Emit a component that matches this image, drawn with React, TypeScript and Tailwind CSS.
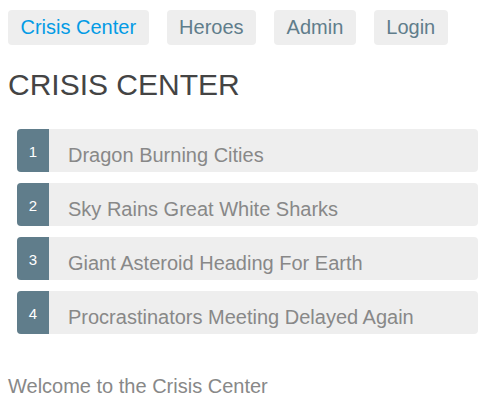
const links = ["Crisis Center", "Heroes", "Admin", "Login"];

const crises = [
  { id: 1, name: "Dragon Burning Cities" },
  { id: 2, name: "Sky Rains Great White Sharks" },
  { id: 3, name: "Giant Asteroid Heading For Earth" },
  { id: 4, name: "Procrastinators Meeting Delayed Again" },
];

export default function App() {
  return (
    <div
      className="min-h-[403px] bg-white pl-2 pr-[5px] pt-[10px]"
      style={{ fontFamily: '"Liberation Sans", Arial, sans-serif' }}
    >
      <nav className="flex gap-[18px]">
        {links.map((label, i) => (
          <a
            key={label}
            className={
              "flex h-[35px] items-center rounded-[4px] bg-[#eeeeee] px-[12.5px] text-[20px] leading-[23px] " +
              (i === 0 ? "text-[#039be5]" : "text-[#607d8b]")
            }
          >
            {label}
          </a>
        ))}
      </nav>

      <h2 className="mt-[23px] text-[30px] font-normal leading-[34px] text-[#444444]">
        CRISIS CENTER
      </h2>

      <ul className="ml-[9px] mt-[27px] flex flex-col gap-[11px]">
        {crises.map((c) => (
          <li
            key={c.id}
            className="flex h-[43px] overflow-hidden rounded-[4px] bg-[#eeeeee]"
          >
            <span className="w-8 bg-[#607d8b] pt-[15px] text-center text-[15px] leading-4 text-white">
              {c.id}
            </span>
            <span className="ml-[19px] pt-[15px] text-[20px] leading-[23px] text-[#888888]">
              {c.name}
            </span>
          </li>
        ))}
      </ul>

      <h3 className="mt-[41px] text-[20px] font-normal leading-[23px] text-[#888888]">
        Welcome to the Crisis Center
      </h3>
    </div>
  );
}
